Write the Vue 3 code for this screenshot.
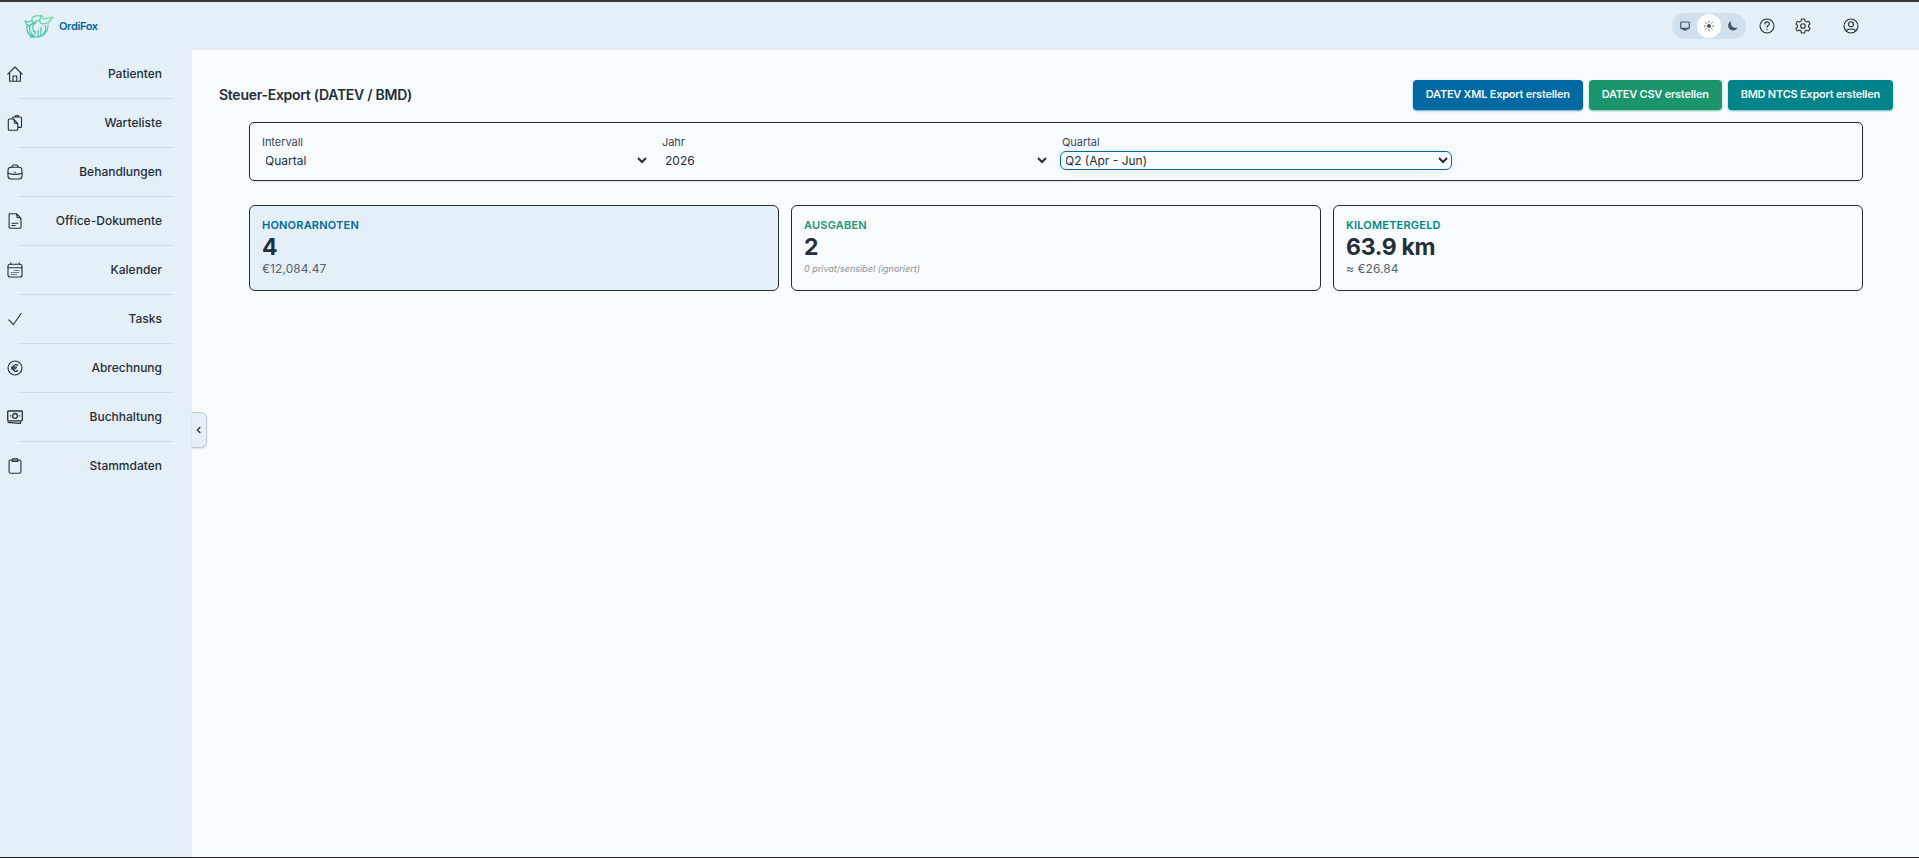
<script setup>
import { ref } from 'vue';

const navItems = [
  { label: 'Patienten', icon: 'home' },
  { label: 'Warteliste', icon: 'copy' },
  { label: 'Behandlungen', icon: 'case' },
  { label: 'Office-Dokumente', icon: 'doc' },
  { label: 'Kalender', icon: 'calendar' },
  { label: 'Tasks', icon: 'check' },
  { label: 'Abrechnung', icon: 'euro' },
  { label: 'Buchhaltung', icon: 'cash' },
  { label: 'Stammdaten', icon: 'clipboard' },
];

const icons = {
  home: '<path d="M.8 8.2 8 1l7.2 7.2M2.6 6.8v8.4h10.8V6.8M6 15V10h3.8v5"/>',
  copy: '<path d="M5.500 3.400V3c0-.6.4-1 1-1h7c.6 0 1 .4 1 1v8.400c0 .6-.4 1-1 1h-2.700M7.800 2c.2-1.100.8-1.400 1.500-1.400h1.200c.8 0 1.300.4 1.500 1.400zM6.500 4H2.300c-.6 0-1 .4-1 1v9.300c0 .6.4 1 1 1h7.500c.6 0 1-.4 1-1V8.600zM6.500 4c1.600 1.400.3 3.300 1.400 4.200.8.600 2 .1 2.900.4"/>',
  case: '<rect x="1" y="3.2" width="14" height="11.800" rx="3"/><path d="M5 3.200C5 1.600 5.600 1 6.500 1h3C10.500 1 11 1.600 11 3.200M1 9.200c4.600 1.500 9.400 1.500 14 0M7.600 8.300h.8"/>',
  doc: '<path d="M2.100 1.500c0-.5.3-.8.8-.8h6.600L14 5.300v9c0 .6-.3.900-.9.900H3c-.6 0-.9-.3-.9-.9zM8.500.8c2 0 1.300 2 1.600 3.700 1.700.2 3.700-.2 3.900 1.700M5 10.200h6M5 12.500h3.200"/>',
  calendar: '<rect x="1" y="2.300" width="14" height="12.700" rx="2"/><path d="M1 5.800h14M3.800 .7v1.400M12.200 .7v1.400"/><path stroke-linecap="butt" stroke-width="1.100" stroke-dasharray="1.200 .9" d="M7.300 8.500h5M4.200 10.500h8M4.200 12.500h5.500"/>',
  check: '<path d="M1.800 8.800 6.300 13.700 14 2.500"/>',
  euro: '<circle cx="8" cy="8" r="7"/><path d="M10.600 5.100C8 3.800 5.900 5.200 5.900 8s2.100 4.200 4.700 2.900M4.500 7.200h5M4.500 8.900h4.300" stroke-width="1.300"/>',
  cash: '<rect x=".7" y="2" width="14.600" height="9.800" rx=".7" stroke-width="1.300"/><circle cx="8" cy="6.900" r="2.400" stroke-width="1.300"/><path d="M3.400 6.900h.3M12.300 6.900h.3M1 13.400l11.400 1c.9.100 1.200-.4 1.200-1.600" stroke-width="1.300"/>',
  clipboard: '<rect x="2.100" y="2" width="11.800" height="13.300" rx="1.500"/><path d="M5.200 3.500V1.700c0-.6.300-.9.900-.9h3.800c.6 0 .9.300.9.900v1.800z"/>',
};

const exportButtons = [
  { label: 'DATEV XML Export erstellen', type: 'blue' },
  { label: 'DATEV CSV erstellen', type: 'green' },
  { label: 'BMD NTCS Export erstellen', type: 'teal' },
];

const stats = [
  { title: 'HONORARNOTEN', value: '4', detail: '€12,084.47', type: 'blue' },
  { title: 'AUSGABEN', value: '2', detail: '0 privat/sensibel (ignoriert)', type: 'green', note: true },
  { title: 'KILOMETERGELD', value: '63.9 km', detail: '≈ €26.84', type: 'teal' },
];

const interval = ref('Quartal');
const year = ref('2026');
const quarter = ref('Q2 (Apr - Jun)');
const theme = ref('light');
</script>

<template>
  <div class="app">
    <header class="topbar">
      <div class="brand">
        <svg class="logo" viewBox="0 0 30 26" fill="none" stroke="url(#foxGradient)" stroke-width="1.200" stroke-linejoin="round" stroke-linecap="round">
          <defs>
            <linearGradient id="foxGradient" x1="0" y1="1" x2="1" y2="0">
              <stop offset="0" stop-color="#25bcae" />
              <stop offset="1" stop-color="#6be391" />
            </linearGradient>
          </defs>
          <path d="M1 8l4 1 3-2 1 3-4 3c-2-1-3-2-4-5zM8 5c2-2 5-3 8-2M16 7l1-5 3 4 4-1 5-1-5 6-6 1-3-3zM3 13c-1 6 3 11 9 11 8 0 12-6 12-12M6 13c-1 4 1 8 4 10M11 9c-3 3-3 6-1 10M11 21v-3M14 23v-6M17 22v-8M20 20c2-2 2-5 1-8M14 7c-2 1-3 2-3 4M6 24h6" />
        </svg>
        <span class="brand-name">OrdiFox</span>
      </div>

      <div class="tools">
        <div class="theme-switch">
          <button :class="{ active: theme === 'system' }" @click="theme = 'system'">
            <svg class="icon-tiny" viewBox="0 0 10 10" fill="none" stroke="currentColor"><rect x=".7" y="1" width="8.600" height="6.600" rx="1" stroke-width="1.200" /><path d="M1 7.400h8M3.300 8.800h3.400" stroke-width="1.500" /></svg>
          </button>
          <button :class="{ active: theme === 'light' }" @click="theme = 'light'">
            <svg class="icon-tiny" viewBox="0 0 10 10" fill="none" stroke="currentColor" stroke-linecap="round"><circle cx="5" cy="5" r="2" fill="currentColor" stroke="none" /><path d="M5 .3v1M5 8.700v1M.3 5h1M8.700 5h1M1.700 1.700l.6.6M7.700 7.700l.6.6M8.300 1.700l-.6.6M2.300 7.700l-.6.6" stroke-width="1" /></svg>
          </button>
          <button :class="{ active: theme === 'dark' }" @click="theme = 'dark'">
            <svg class="icon-tiny" viewBox="0 0 10 10" fill="currentColor"><path d="M3 .3C2.200 4.500 4.800 7.700 9.700 6.600 8 9.700 4.300 10.500 1.700 8.200-.8 5.800-.1 1.800 3 .3z" /></svg>
          </button>
        </div>
        <svg class="icon help" viewBox="0 0 16 16"><circle cx="8" cy="8" r="7" /><path d="M5.900 6.100C5.900 3.200 10.300 3.200 10.300 6c0 1.500-2.300 1.600-2.300 3.200M8 11.400v.4" /></svg>
        <svg class="icon gear" viewBox="0 0 16 16"><path d="M6.500 1h3l.5 2.100 1.500.9 2.100-.7 1.500 2.600L13.500 7.400v1.500l1.600 1.500-1.500 2.600-2.100-.7-1.500.8L9.500 15h-3L6 13.100l-1.500-.8-2.100.7-1.500-2.600 1.600-1.500V7.400L.9 5.900l1.500-2.600 2.100.7L6 3.100z" /><circle cx="8" cy="8" r="2.300" /></svg>
        <svg class="icon user" viewBox="0 0 16 16"><circle cx="8" cy="8" r="7" /><circle cx="8" cy="6.300" r="2.500" /><path d="M3.300 13c1-2.700 8.400-2.700 9.400 0" /></svg>
      </div>
    </header>

    <div class="body">
      <nav class="sidebar">
        <a v-for="item in navItems" :key="item.label" class="nav-item">
          <svg class="icon" viewBox="0 0 16 16" v-html="icons[item.icon]"></svg>
          <span>{{ item.label }}</span>
        </a>
        <button class="collapse">
          <svg viewBox="0 0 6 8"><path d="M4.300 1 1.300 4l3 3" /></svg>
        </button>
      </nav>

      <main class="content">
        <div class="page-head">
          <h1>Steuer-Export (DATEV / BMD)</h1>
          <div class="actions">
            <button v-for="b in exportButtons" :key="b.label" :class="['export', b.type]">{{ b.label }}</button>
          </div>
        </div>

        <section class="filters">
          <label class="field">
            <span>Intervall</span>
            <select v-model="interval">
              <option>Quartal</option>
            </select>
          </label>
          <label class="field">
            <span>Jahr</span>
            <select v-model="year">
              <option>2026</option>
            </select>
          </label>
          <label class="field">
            <span>Quartal</span>
            <select v-model="quarter" class="focused">
              <option>Q2 (Apr - Jun)</option>
            </select>
          </label>
        </section>

        <section class="stats">
          <div v-for="s in stats" :key="s.title" :class="['stat', s.type]">
            <div class="stat-title">{{ s.title }}</div>
            <div class="stat-value">{{ s.value }}</div>
            <div :class="['stat-detail', { note: s.note }]">{{ s.detail }}</div>
          </div>
        </section>
      </main>
    </div>
  </div>
</template>

<style>
body {
  margin: 0;
  overflow: hidden;
}
</style>

<style scoped>
.app {
  box-sizing: border-box;
  height: 858px;
  display: flex;
  flex-direction: column;
  border-top: 2px solid #3b3838;
  border-bottom: 1px solid #1c1e20;
  background: #f8fcff;
  color: #232e38;
  font-family: Inter, sans-serif;
  font-size: 12px;
}

button {
  font-family: inherit;
  border: 0;
  padding: 0;
}

.topbar {
  height: 48px;
  flex: none;
  display: flex;
  justify-content: space-between;
  background: #e5eff8;
}

.brand {
  display: flex;
  align-items: center;
  gap: 5px;
  padding-left: 24px;
}

.logo {
  width: 30px;
  height: 26px;
}

.brand-name {
  color: #0069a3;
  font-size: 11px;
  font-weight: 600;
  letter-spacing: -0.35px;
}

.tools {
  display: flex;
  align-items: center;
  padding-right: 60px;
}

.theme-switch {
  display: flex;
  align-items: center;
  box-sizing: border-box;
  width: 74px;
  height: 26px;
  padding: 1px;
  border-radius: 13px;
  background: #d0e0ed;
}

.theme-switch button {
  width: 24px;
  height: 24px;
  display: flex;
  align-items: center;
  justify-content: center;
  border-radius: 50%;
  background: transparent;
  color: #475563;
}

.theme-switch .active {
  background: #fff;
}

.icon-tiny {
  width: 10px;
  height: 10px;
}

.icon {
  width: 16px;
  height: 16px;
  fill: none;
  stroke: #232e38;
  stroke-width: 1.1;
  stroke-linecap: round;
  stroke-linejoin: round;
}

.help {
  margin-left: 13px;
}

.gear {
  margin-left: 20px;
}

.user {
  margin-left: 32px;
}

.body {
  flex: 1;
  display: flex;
}

.sidebar {
  position: relative;
  width: 192px;
  flex: none;
  background: #e5eff8;
}

.nav-item {
  box-sizing: border-box;
  height: 49px;
  display: flex;
  align-items: center;
  justify-content: space-between;
  padding: 0 30px 2px 7px;
  font-weight: 500;
}

/* inset separator between entries */
.nav-item:not(:nth-child(9)) {
  background: linear-gradient(#cfdae5, #cfdae5) 18px 100% / 156px 1px no-repeat;
}

.collapse {
  position: absolute;
  left: 192px;
  top: 362px;
  box-sizing: border-box;
  width: 15px;
  height: 36px;
  display: flex;
  align-items: center;
  justify-content: center;
  border: 1px solid #bfcbd6;
  border-left: 0;
  border-radius: 0 6px 6px 0;
  background: #e5eff8;
  box-shadow: 0 1px 2px rgba(35, 46, 56, 0.15);
}

.collapse svg {
  width: 6px;
  height: 8px;
  fill: none;
  stroke: #232e38;
  stroke-width: 1.2;
}

.content {
  flex: 1;
  padding: 30px 26px 0 27px;
}

.page-head {
  display: flex;
  align-items: center;
  justify-content: space-between;
  height: 30px;
}

h1 {
  margin: 0;
  padding-bottom: 2px;
  font-size: 14px;
  font-weight: 600;
  letter-spacing: -0.27px;
}

.actions {
  display: flex;
  gap: 6px;
}

.export {
  height: 30px;
  padding: 0 13px 2px;
  border-radius: 4px;
  color: #f0f8ff;
  font-size: 11px;
  font-weight: 600;
  letter-spacing: -0.24px;
}

.export.blue {
  background: #0069a3;
  box-shadow: 0 1px 2px rgba(0, 105, 163, 0.6);
}

.export.green {
  background: #1b966c;
  box-shadow: 0 1px 2px rgba(27, 150, 108, 0.6);
}

.export.teal {
  background: #008489;
  box-shadow: 0 1px 2px rgba(0, 132, 137, 0.6);
}

.filters {
  box-sizing: border-box;
  height: 59px;
  margin: 12px 30px 0;
  padding: 12px;
  display: grid;
  grid-template-columns: repeat(4, 1fr);
  gap: 12px;
  border: 1px solid #232e38;
  border-radius: 5px;
  box-shadow: 0 1px 2px rgba(35, 46, 56, 0.12);
}

.field {
  display: flex;
  flex-direction: column;
  gap: 2px;
}

.field span {
  color: #38445a;
  font-size: 11px;
  line-height: 15px;
  letter-spacing: -0.05px;
}

select {
  box-sizing: border-box;
  flex: none;
  width: 100%;
  height: 17px;
  padding: 0;
  border: 0;
  border-radius: 4px;
  background: transparent;
  color: #232e38;
  font-family: inherit;
  font-size: 12px;
  text-indent: -1px;
  outline: none;
}

/* the ring sits outside the normal field box */
select.focused {
  width: calc(100% + 4px);
  height: 19px;
  margin: -1px -2px;
  padding: 0 1px;
  border: 1px solid #0069a3;
  border-radius: 6px;
  box-shadow: 0 1px 6px 2px rgba(0, 105, 163, 0.06);
}

.stats {
  display: grid;
  grid-template-columns: repeat(3, 1fr);
  gap: 12px;
  margin: 24px 30px 0;
}

.stat {
  box-sizing: border-box;
  height: 86px;
  padding: 12px;
  border: 1px solid #232e38;
  border-radius: 6px;
}

.stat.blue {
  background: #e5eff8;
}

.stat-title {
  font-size: 11px;
  line-height: 15px;
  font-weight: 600;
  letter-spacing: 0.2px;
}

.blue .stat-title {
  color: #0069a3;
}

.green .stat-title {
  color: #1b966c;
}

.teal .stat-title {
  color: #008489;
}

.stat-value {
  font-size: 23px;
  line-height: 28px;
  font-weight: 700;
  letter-spacing: -0.3px;
}

.stat-detail {
  color: #59636c;
  font-size: 12px;
  line-height: 16px;
  letter-spacing: 0.08px;
}

.stat-detail.note {
  color: #8b9298;
  font-size: 9px;
  font-style: italic;
  letter-spacing: 0;
}
</style>
